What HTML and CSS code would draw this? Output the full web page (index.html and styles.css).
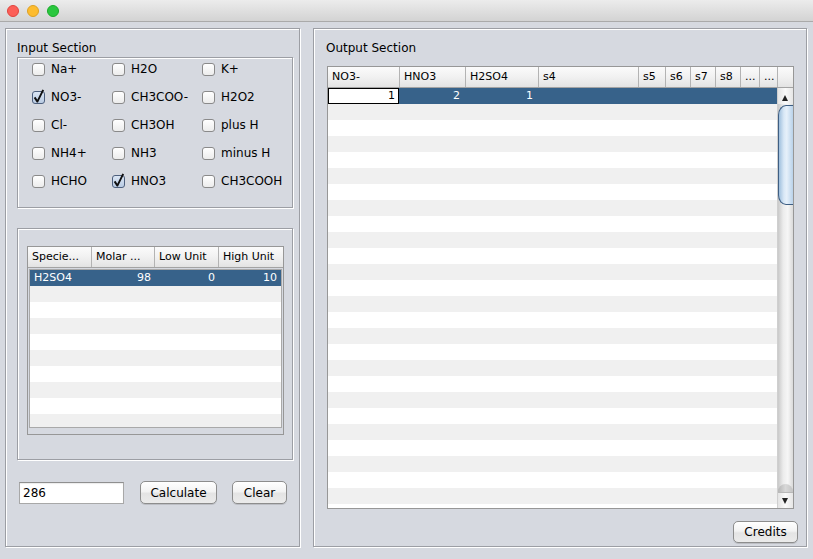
FILE: index.html
```html
<!DOCTYPE html>
<html>
<head>
<meta charset="utf-8">
<title>Species Calculator</title>
<link rel="stylesheet" href="styles.css">
</head>
<body>
<div class="window">
  <div class="titlebar">
    <span class="light red"></span>
    <span class="light yellow"></span>
    <span class="light green"></span>
  </div>
  <div class="main">
    <section class="panel panel-input">
      <div class="title">Input Section</div>
      <div class="group checks">
        <label class="cb"><span class="box"></span>Na+</label>
        <label class="cb"><span class="box"></span>H2O</label>
        <label class="cb"><span class="box"></span>K+</label>
        <label class="cb"><span class="box on"><svg viewBox="0 0 13 13"><path d="M2.6 6.4 L5.4 10.6 L11.2 -1.2"/></svg></span>NO3-</label>
        <label class="cb"><span class="box"></span>CH3COO-</label>
        <label class="cb"><span class="box"></span>H2O2</label>
        <label class="cb"><span class="box"></span>Cl-</label>
        <label class="cb"><span class="box"></span>CH3OH</label>
        <label class="cb"><span class="box"></span>plus H</label>
        <label class="cb"><span class="box"></span>NH4+</label>
        <label class="cb"><span class="box"></span>NH3</label>
        <label class="cb"><span class="box"></span>minus H</label>
        <label class="cb"><span class="box"></span>HCHO</label>
        <label class="cb"><span class="box on"><svg viewBox="0 0 13 13"><path d="M2.6 6.4 L5.4 10.6 L11.2 -1.2"/></svg></span>HNO3</label>
        <label class="cb"><span class="box"></span>CH3COOH</label>
      </div>
      <div class="group species">
        <div class="spane">
          <div class="shead">
            <div class="hcell">Specie...</div>
            <div class="hcell">Molar ...</div>
            <div class="hcell">Low Unit</div>
            <div class="hcell">High Unit</div>
          </div>
          <div class="sbody">
            <div class="srow sel">
              <div class="cell">H2SO4</div>
              <div class="cell num">98</div>
              <div class="cell num">0</div>
              <div class="cell num">10</div>
            </div>
          </div>
        </div>
      </div>
      <div class="controls">
        <div class="field">286</div>
        <button class="btn btn-calc">Calculate</button>
        <button class="btn btn-clear">Clear</button>
      </div>
    </section>
    <section class="panel panel-output">
      <div class="title">Output Section</div>
      <div class="opane">
        <div class="ohead">
          <div class="hcell">NO3-</div>
          <div class="hcell">HNO3</div>
          <div class="hcell">H2SO4</div>
          <div class="hcell">s4</div>
          <div class="hcell">s5</div>
          <div class="hcell">s6</div>
          <div class="hcell">s7</div>
          <div class="hcell">s8</div>
          <div class="hcell">...</div>
          <div class="hcell">...</div>
          <div class="hcell corner"></div>
        </div>
        <div class="obody">
          <div class="orows">
            <div class="orow sel">
              <div class="cell num focus">1</div>
              <div class="cell num">2</div>
              <div class="cell num">1</div>
              <div class="cell"></div>
              <div class="cell"></div>
              <div class="cell"></div>
              <div class="cell"></div>
              <div class="cell"></div>
              <div class="cell"></div>
              <div class="cell"></div>
            </div>
          </div>
          <div class="vscroll">
            <div class="arrow-box"><span class="tri up"></span></div>
            <div class="thumb"></div>
            <div class="track"></div>
            <div class="track-end"></div>
            <div class="arrow-box down-box"><span class="tri down"></span></div>
          </div>
        </div>
      </div>
      <button class="btn btn-credits">Credits</button>
    </section>
  </div>
</div>
</body>
</html>
```

FILE: styles.css
```css
* { box-sizing: border-box; }
html, body { margin: 0; padding: 0; }
body {
  width: 813px;
  height: 559px;
  overflow: hidden;
  background: #d6d9e0;
  font-family: "DejaVu Sans", "Liberation Sans", sans-serif;
  font-size: 12px;
  color: #000;
}
.window { width: 813px; height: 559px; }

.titlebar {
  height: 22px;
  background: linear-gradient(#ececec, #d3d3d3);
  border-bottom: 1px solid #aaaaaa;
  display: flex;
  align-items: center;
  gap: 8px;
  padding-left: 7px;
}
.light { width: 12px; height: 12px; border-radius: 50%; }
.red { background: #fc5f57; border: 1px solid #e0443e; }
.yellow { background: #fdbc2e; border: 1px solid #dea123; }
.green { background: #2ac73f; border: 1px solid #1aab29; }

.main {
  display: flex;
  gap: 13px;
  padding: 6px 0 0 5px;
}
.panel {
  height: 519px;
  border: 1px solid #9c9ea4;
  box-shadow: inset 1px 1px 0 #fff, 1px 1px 0 #fff;
  display: flex;
  flex-direction: column;
}
.panel-input { width: 295px; padding: 12px 6px 0 11px; }
.panel-output { width: 494px; padding: 12px 0 0 12px; }
.title { height: 15px; line-height: 15px; font-size: 12px; }

.group {
  border: 1px solid #9c9ea4;
  box-shadow: inset 1px 1px 0 #fff, 1px 1px 0 #fff;
  width: 276px;
}
.checks {
  margin-top: 1px;
  height: 151px;
  padding: 5px 0 0 14px;
  display: grid;
  grid-template-columns: 80px 90px auto;
  grid-auto-rows: 13px;
  row-gap: 15px;
}
.cb {
  display: flex;
  align-items: center;
  gap: 6px;
  white-space: nowrap;
  line-height: 13px;
}
.box {
  width: 13px;
  height: 13px;
  flex: none;
  border: 1px solid #8a8a8a;
  border-radius: 3px;
  background: linear-gradient(#ffffff, #ececec);
  position: relative;
}
.box.on {
  border-color: #4d5f7d;
  background: linear-gradient(#dbe6f4, #b9cbe3);
}
.box svg {
  position: absolute;
  left: -1px;
  top: -1px;
  width: 13px;
  height: 13px;
  overflow: visible;
}
.box svg path { fill: none; stroke: #111; stroke-width: 1.9; stroke-linejoin: round; }

.species {
  margin-top: 20px;
  height: 232px;
  padding: 17px 0 0 9px;
}
.spane {
  width: 257px;
  height: 189px;
  border: 1px solid #979797;
  display: flex;
  flex-direction: column;
}
.shead, .ohead {
  display: grid;
  height: 21px;
  border-bottom: 1px solid #a3a3a3;
  background: linear-gradient(#fbfbfb, #f1f1f1 50%, #e3e3e3);
  font-size: 11px;
}
.shead { grid-template-columns: 64px 63px 64px 64px; }
.hcell {
  line-height: 20px;
  padding-left: 4px;
  border-right: 1px solid #b3b3b3;
  white-space: nowrap;
  overflow: hidden;
}
.shead .hcell:last-child { border-right: none; }
.sbody {
  margin: 1px 1px 0;
  height: 159px;
  border: 1px solid #a9a9a9;
  background: repeating-linear-gradient(#ffffff 0 16px, #f0f0f0 16px 32px);
  font-size: 11px;
}
.srow {
  display: grid;
  grid-template-columns: 62px 63px 64px 62px;
  height: 16px;
  line-height: 16px;
}
.sel { background: #37628a; color: #fff; }
.cell { padding: 0 4px; white-space: nowrap; overflow: hidden; }
.num { text-align: right; }

.controls {
  margin-top: 21px;
  height: 23px;
  display: flex;
  align-items: center;
}
.field {
  margin-left: 2px;
  width: 105px;
  height: 22px;
  background: #fff;
  border: 1px solid #a8a8a8;
  border-top-color: #8f8f8f;
  box-shadow: inset 0 1px 1px rgba(0,0,0,0.08);
  line-height: 20px;
  padding-left: 3px;
  font-size: 12px;
}
.btn {
  font-family: inherit;
  font-size: 12px;
  color: #000;
  height: 23px;
  padding: 0;
  border: 1px solid #8d8d8d;
  border-radius: 5px;
  background: linear-gradient(#ffffff, #f3f3f3 45%, #e4e4e4 55%, #ebebeb);
  box-shadow: 0 1px 0 rgba(0,0,0,0.12);
  text-align: center;
}
.btn-calc { margin-left: 16px; width: 77px; }
.btn-clear { margin-left: 15px; width: 55px; }

.opane {
  margin-top: 10px;
  margin-left: 1px;
  width: 467px;
  height: 443px;
  border: 1px solid #979797;
  display: flex;
  flex-direction: column;
}
.ohead { grid-template-columns: 72px 66px 73px 100px 27px 25px 25px 25px 19px 18px 15px; }
.ohead .hcell.corner { border-right: none; }
.obody {
  flex: 1;
  display: flex;
  overflow: hidden;
}
.orows {
  width: 449px;
  background: repeating-linear-gradient(#ffffff 0 16px, #f0f0f0 16px 32px);
  font-size: 11px;
}
.orow {
  display: grid;
  grid-template-columns: 71px 66px 73px 100px 27px 25px 25px 25px 19px 18px;
  height: 16px;
  line-height: 16px;
}
.orow .cell { padding: 0 5px 0 4px; }
.orow .cell.focus {
  background: #fff;
  color: #000;
  border: 1px solid #000;
  line-height: 14px;
  padding-right: 3px;
}

.vscroll {
  width: 16px;
  display: flex;
  flex-direction: column;
  background: linear-gradient(to right, #c9c9c9, #ececec 35%, #f6f6f6 65%, #dadada);
  border-left: 1px solid #cfcfcf;
}
.arrow-box {
  height: 16px;
  position: relative;
  background: linear-gradient(to right, #e4e4e4, #fafafa 50%, #e6e6e6);
}
.tri {
  position: absolute;
  left: 4px;
  width: 0;
  height: 0;
  border-left: 3.5px solid transparent;
  border-right: 3.5px solid transparent;
}
.tri.up { top: 7px; border-bottom: 6px solid #222; }
.tri.down { top: 5px; border-top: 6px solid #222; }
.thumb {
  margin-top: 1px;
  height: 100px;
  border: 1px solid #3e5e83;
  border-right: none;
  border-radius: 8px 0 0 8px / 10px 0 0 10px;
  background: linear-gradient(to right, #9fbfdd, #d9e8f6 35%, #e6f0fa 55%, #b9d2ea);
}
.track { flex: 1; }
.track-end {
  height: 8px;
  background: linear-gradient(to right, #b5b5b5, #d8d8d8 50%, #c4c4c4);
  border-radius: 8px 8px 0 0;
}
.down-box { border-top: 1px solid #b8b8b8; }

.btn-credits {
  margin-top: 12px;
  align-self: flex-end;
  margin-right: 8px;
  width: 65px;
  height: 22px;
}
```
